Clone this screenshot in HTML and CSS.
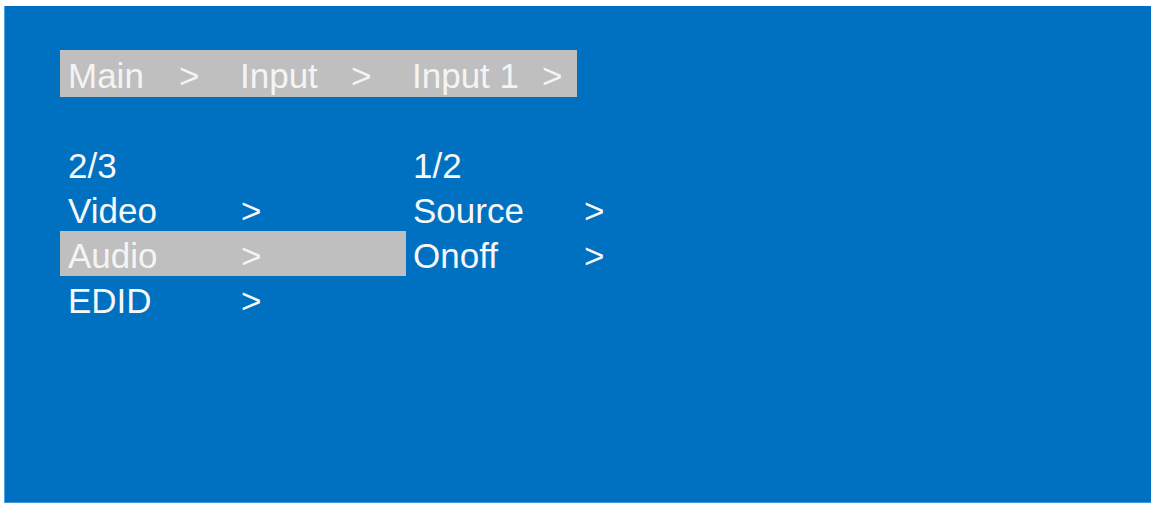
FILE: index.html
```html
<!DOCTYPE html>
<html>
<head>
<meta charset="utf-8">
<link rel="stylesheet" href="styles.css">
</head>
<body>
<div class="screen">
  <div class="crumbs">
    <span class="c-main">Main</span>
    <span class="c-sep1">&gt;</span>
    <span class="c-input">Input</span>
    <span class="c-sep2">&gt;</span>
    <span class="c-input1">Input 1</span>
    <span class="c-sep3">&gt;</span>
  </div>
  <div class="menu">
    <div class="col col-left">
      <div class="row">2/3</div>
      <div class="row"><span class="label">Video</span><span class="arrow">&gt;</span></div>
      <div class="row sel"><span class="label">Audio</span><span class="arrow">&gt;</span></div>
      <div class="row"><span class="label">EDID</span><span class="arrow">&gt;</span></div>
    </div>
    <div class="col col-right">
      <div class="row">1/2</div>
      <div class="row"><span class="label">Source</span><span class="arrow">&gt;</span></div>
      <div class="row"><span class="label">Onoff</span><span class="arrow">&gt;</span></div>
    </div>
  </div>
</div>
</body>
</html>
```
FILE: styles.css
```css
html, body {
  margin: 0;
  padding: 0;
  background: #ffffff;
}
body {
  width: 1156px;
  height: 508px;
  overflow: hidden;
}
.screen {
  box-sizing: border-box;
  margin: 6px 0 0 4px;
  width: 1147px;
  height: 497px;
  background: #0071c1;
  border-left: 1px solid #4fa3df;
  border-bottom: 1px solid #3f96d8;
  padding: 44px 0 0 55px;
  font-family: "Liberation Sans", Arial, sans-serif;
  font-size: 35px;
  color: #f7f7f7;
  display: flex;
  flex-direction: column;
}
.crumbs {
  box-sizing: border-box;
  width: 517px;
  height: 47px;
  background: #bfbfbf;
  padding: 6px 0 1px 8px;
  line-height: 40px;
  display: flex;
  white-space: pre;
  color: #f4f4f4;
}
.c-main { width: 111px; }
.c-sep1 { width: 61px; }
.c-input { width: 111px; }
.c-sep2 { width: 61px; }
.c-input1 { width: 130px; }
.menu {
  display: flex;
  margin-top: 44px;
}
.col-left { width: 346px; }
.col-right { width: 300px; }
.row {
  box-sizing: border-box;
  height: 45px;
  line-height: 40px;
  padding-top: 5px;
  display: flex;
  white-space: pre;
}
.col-left .row { padding-left: 8px; }
.col-right .row { padding-left: 7px; }
.col-left .label { width: 173px; }
.col-right .label { width: 171px; }
.row.sel {
  background: #bfbfbf;
  color: #f4f4f4;
}
```
